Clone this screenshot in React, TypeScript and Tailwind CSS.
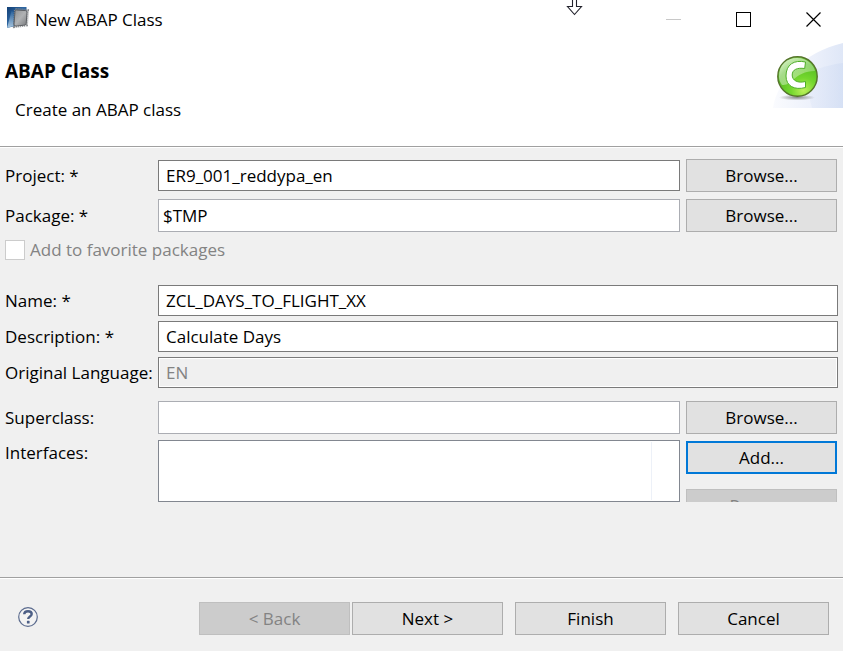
import type { ButtonHTMLAttributes, ReactNode } from 'react';
import { clsx } from 'clsx';

function PushButton({ className, ...props }: ButtonHTMLAttributes<HTMLButtonElement>) {
  return (
    <button
      type="button"
      className={clsx(
        'h-[33px] w-[151px] shrink-0 border text-center leading-6',
        'disabled:border-[#bfbfbf] disabled:bg-[#cccccc] disabled:text-[#838383]',
        className ?? 'border-[#adadad] bg-[#e1e1e1]',
      )}
      {...props}
    />
  );
}

function Row({ id, label, children, className }: { id: string; label: string; children: ReactNode; className?: string }) {
  return (
    <div className={clsx('flex items-center', className)}>
      <label htmlFor={id} className="w-[153px] shrink-0 whitespace-nowrap leading-6">
        {label}
      </label>
      <div className="flex min-w-0 grow items-center gap-[6px]">{children}</div>
    </div>
  );
}

const decorated = 'h-[31px] min-w-0 grow border border-[#7a7a7a] bg-white px-[7px] leading-6 outline-none';
const plain = 'h-[33px] min-w-0 grow border border-[#abadb3] bg-white px-1 leading-6 outline-none';

function ChipIcon() {
  return (
    <svg width="24" height="24" viewBox="0 0 24 24" aria-hidden="true">
      <defs>
        <linearGradient id="card" x1="0" y1="0" x2="1" y2="1">
          <stop offset="0" stopColor="#123f75" />
          <stop offset="0.45" stopColor="#2f68a3" />
          <stop offset="1" stopColor="#123c70" />
        </linearGradient>
        <linearGradient id="fold" x1="0" y1="0" x2="0" y2="1">
          <stop offset="0" stopColor="#2a629c" />
          <stop offset="1" stopColor="#a9c6de" />
        </linearGradient>
        <linearGradient id="chip" x1="0" y1="0" x2="1" y2="1">
          <stop offset="0" stopColor="#8f9193" />
          <stop offset="0.5" stopColor="#b0b2b4" />
          <stop offset="1" stopColor="#77797c" />
        </linearGradient>
      </defs>
      <path d="M1 1h19.500v6L9 20 1 22z" fill="url(#card)" />
      <path d="M1 22L5.500 5l2 1v14z" fill="url(#fold)" />
      <path d="M9.500 3.500l12 1-1 14.500-12 1.500z" fill="none" stroke="#8a8d91" strokeWidth="3" strokeDasharray="1 1" />
      <path d="M9 5.500Q9 4 10.500 4l9 .6q1.500 0 1.500 1.500l-.8 11.500q0 1.500-1.500 1.500l-8.700 1q-2 0-2-2z" fill="url(#chip)" stroke="#5d6064" />
    </svg>
  );
}

function ClassBanner() {
  return (
    <svg width="71" height="66" viewBox="0 0 71 66" aria-hidden="true">
      <defs>
        <linearGradient id="swoosh" x1="0" y1="0" x2="1" y2="0">
          <stop offset="0" stopColor="#fafbfe" />
          <stop offset="0.55" stopColor="#edf1fb" />
          <stop offset="1" stopColor="#dfe7f7" />
        </linearGradient>
        <linearGradient id="sweep" x1="0" y1="0" x2="1" y2="0">
          <stop offset="0" stopColor="#e6ecf9" />
          <stop offset="1" stopColor="#d0dcf3" />
        </linearGradient>
        <radialGradient id="ball" cx="0.65" cy="0.85" r="0.9">
          <stop offset="0" stopColor="#bdf05a" />
          <stop offset="0.35" stopColor="#74d72e" />
          <stop offset="0.75" stopColor="#55bb22" />
          <stop offset="1" stopColor="#8fdc5c" />
        </radialGradient>
        <linearGradient id="gloss" x1="0" y1="0" x2="1" y2="1">
          <stop offset="0" stopColor="#ffffff" stopOpacity=".65" />
          <stop offset="1" stopColor="#ffffff" stopOpacity=".15" />
        </linearGradient>
        <radialGradient id="shade">
          <stop offset="0" stopColor="#666" stopOpacity=".75" />
          <stop offset="1" stopColor="#666" stopOpacity="0" />
        </radialGradient>
      </defs>
      <path d="M1 66C5 38 32 10 71 1v65z" fill="url(#swoosh)" />
      <path d="M32 34C42 27 55 23 71 21v45H40z" fill="url(#sweep)" opacity=".6" />
      <ellipse cx="25" cy="55.500" rx="18" ry="3" fill="url(#shade)" />
      <circle cx="25.500" cy="34.500" r="19.700" fill="url(#ball)" stroke="#55742a" strokeWidth="1.400" />
      <path d="M7 35C7 22 15 16 25 16s17 7 18 13c-10 0-17 4-22 9-4 4-7 5-11 5-2-3-3-5-3-8z" fill="url(#gloss)" />
      <path
        d="M33.500 20l-.8 6.500c-7.500-1-12.500 1-12.500 6.500s5.500 8.500 13.300 6.500v6c-11 3-19.500-1.500-19.500-11.500C14 22.500 22 17.500 33.500 20z"
        fill="#fff"
        stroke="#4fae28"
        strokeWidth="1"
      />
    </svg>
  );
}

function HelpIcon() {
  return (
    <svg width="20" height="20" viewBox="0 0 20 20" fill="none" aria-hidden="true">
      <circle cx="10" cy="10" r="9.300" stroke="#5b6b8e" strokeWidth="1.200" fill="#f3f3f3" />
      <path d="M6.200 7.300C6.300 5 7.800 4.200 10 4.200c2.300 0 3.700 1 3.700 2.800 0 2.500-3.500 2.400-3.500 5" stroke="#4d5f86" strokeWidth="2.400" />
      <rect x="8.900" y="13.800" width="2.700" height="2.700" rx=".6" fill="#4d5f86" />
    </svg>
  );
}

const caption = 'flex h-full w-[50px] items-center justify-center';

export default function App() {
  return (
    <div className="relative flex min-h-screen flex-col bg-[#f0f0f0] font-['Segoe_UI','Open_Sans','Noto_Sans',sans-serif] text-[17px] leading-6 text-black">
      <header className="border-b border-[#a0a0a0] bg-white pb-6">
        <div className="flex h-10 items-center pl-[6px]">
          <div className="pb-1">
            <ChipIcon />
          </div>
          <span className="grow pl-[5px]">New ABAP Class</span>
          <div className="flex h-full gap-5 pr-[5px] pb-[2px]">
            <button type="button" disabled aria-label="Minimize" className={caption}>
              <svg width="15" height="15"><path d="M0 7.500h15" stroke="#c8c8c8" /></svg>
            </button>
            <button type="button" aria-label="Maximize" className={caption}>
              <svg width="15" height="15"><rect x=".5" y=".5" width="14" height="14" fill="none" stroke="#000" /></svg>
            </button>
            <button type="button" aria-label="Close" className={caption}>
              <svg width="15" height="15"><path d="M.5.5l14 14M14.500.5l-14 14" stroke="#000" strokeWidth="1.200" /></svg>
            </button>
          </div>
        </div>
        <div className="flex items-start justify-between pt-[2px]">
          <div className="flex flex-col pl-[5px] pt-[17px]">
            <h1 className="text-[19px] leading-6 font-bold">ABAP Class</h1>
            <p className="pt-[15px] pl-[10px]">Create an ABAP class</p>
          </div>
          <ClassBanner />
        </div>
      </header>

      <main className="flex grow flex-col border-t border-white pt-[11px] pr-[6px] pb-6 pl-[5px]">
        <Row id="project" label="Project: *">
          <input id="project" className={decorated} defaultValue="ER9_001_reddypa_en" />
          <PushButton>Browse...</PushButton>
        </Row>
        <Row id="package" label="Package: *" className="mt-[7px]">
          <input id="package" className={plain} defaultValue="$TMP" />
          <PushButton>Browse...</PushButton>
        </Row>
        <label className="mt-[6px] flex h-6 items-center gap-[5px] text-[#838383]">
          <input
            type="checkbox"
            disabled
            className="size-5 appearance-none border border-[#cccccc] bg-white"
          />
          Add to favorite packages
        </label>

        <div className="mt-[23px] -mr-px flex flex-col gap-[5px]">
          <Row id="name" label="Name: *">
            <input id="name" className={decorated} defaultValue="ZCL_DAYS_TO_FLIGHT_XX" />
          </Row>
          <Row id="description" label="Description: *">
            <input id="description" className={decorated} defaultValue="Calculate Days" />
          </Row>
          <Row id="language" label="Original Language:">
            <input
              id="language"
              disabled
              className="h-[31px] min-w-0 grow border border-[#7a7a7a] bg-[#f0f0f0] px-[7px] leading-6 text-[#838383] inset-ring inset-ring-white"
              defaultValue="EN"
            />
          </Row>
        </div>

        <Row id="superclass" label="Superclass:" className="mt-[13px]">
          <input id="superclass" className={plain} />
          <PushButton>Browse...</PushButton>
        </Row>
        <div className="mt-[6px] flex h-[62px] items-start overflow-hidden">
          <span id="interfaces" className="w-[153px] shrink-0 pt-px">Interfaces:</span>
          <div
            role="listbox"
            aria-labelledby="interfaces"
            className="flex h-full grow justify-end border border-[#828790] bg-white py-px pr-[27px]"
          >
            <div className="w-px bg-[#edf1f8]" />
          </div>
          <div className="flex flex-col gap-[15px] pt-px pl-[6px]">
            <PushButton className="border-2 border-[#0078d7] bg-[#e1e1e1]">Add...</PushButton>
            <PushButton disabled>Remove</PushButton>
          </div>
        </div>
      </main>

      <footer className="border-t border-[#a0a0a0]">
        <div className="flex items-center border-t border-white pt-[23px] pr-[14px] pb-4 pl-[18px]">
          <button type="button" aria-label="Help" className="pb-1">
            <HelpIcon />
          </button>
          <div className="ml-auto flex gap-3">
            <div className="flex gap-[2px]">
              <PushButton disabled>&lt; Back</PushButton>
              <PushButton>Next &gt;</PushButton>
            </div>
            <PushButton>Finish</PushButton>
            <PushButton>Cancel</PushButton>
          </div>
        </div>
      </footer>

      <svg className="absolute top-0 left-[566px]" width="17" height="16" viewBox="0 0 17 16" aria-hidden="true">
        <path d="M6.500-1v7.500H1.500l7 8 7-8H10.500V-1" fill="#fff" stroke="#22222c" strokeWidth="1.100" />
      </svg>
    </div>
  );
}
